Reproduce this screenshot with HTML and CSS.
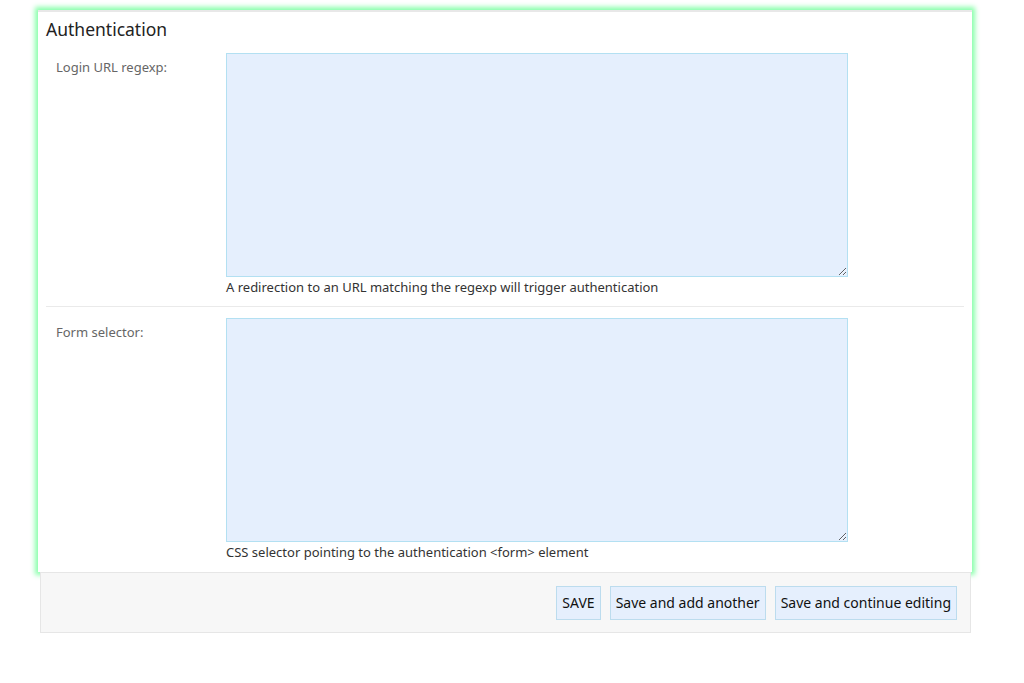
FILE: index.html
```html
<!DOCTYPE html>
<html lang="en">

<head>
    <meta charset="UTF-8">
    <title>Authentication</title>
    <link rel="stylesheet" href="styles.css">
</head>

<body>
    <form id="authForm">
        <fieldset class="module">
            <h2>Authentication</h2>

            <div class="form-row">
                <label for="login_url">Login URL regexp:</label>
                <div class="field">
                    <textarea id="login_url" name="login_url"></textarea>
                    <div class="help">A redirection to an URL matching the regexp will trigger authentication</div>
                </div>
            </div>

            <div class="form-row last">
                <label for="form_selector">Form selector:</label>
                <div class="field">
                    <textarea id="form_selector" name="form_selector"></textarea>
                    <div class="help">CSS selector pointing to the authentication &lt;form&gt; element</div>
                </div>
            </div>
        </fieldset>

        <div class="submit-row">
            <input type="submit" value="SAVE" name="_save">
            <input type="submit" value="Save and add another" name="_addanother">
            <input type="submit" value="Save and continue editing" name="_continue">
        </div>
    </form>
</body>

</html>
```

FILE: styles.css
```css
body {
    font-family: "Noto Sans", "Open Sans", sans-serif;
    margin: 0;
    padding: 0;
    background: #fff;
    color: #333;
}

.module {
    margin: 10px 52px 0 38px;
    padding: 0 8px 1px 8px;
    border: none;
    border-top: 2px solid #e8e8e8;
    background: #fff;
    box-shadow: 0 0 5px 3px #88ffaa;
    min-width: 0;
}

.module h2 {
    margin: 0;
    padding: 5px 0 2px 0;
    font-size: 17.5px;
    line-height: 24px;
    font-weight: normal;
    color: #222;
}

.form-row {
    display: flex;
    padding: 10px 10px 11px 10px;
    border-bottom: 1px solid #eaeaea;
}

.form-row + .form-row {
    padding-top: 11px;
}

.form-row.last {
    border-bottom: none;
}

.form-row label {
    width: 170px;
    flex-shrink: 0;
    padding-top: 5px;
    font-size: 13px;
    color: #666;
}

.field textarea {
    display: block;
    box-sizing: border-box;
    width: 622px;
    height: 224px;
    margin: 0;
    background: #e5effd;
    border: 1px solid #b3e0f2;
    font-family: inherit;
}

.help {
    font-size: 13px;
    color: #333;
    padding-top: 2px;
    line-height: 16px;
}

.submit-row {
    display: flex;
    justify-content: flex-end;
    gap: 9px;
    margin: 0 53px 0 40px;
    padding: 13px 13px 12px 0;
    background: #f7f7f7;
    border: 1px solid #e6e6e6;
}

.submit-row input[type="submit"] {
    height: 34px;
    padding: 0 5px 1px 5px;
    font-family: inherit;
    font-size: 14px;
    color: #111;
    background: #e5effd;
    border: 1px solid #bcdcee;
    cursor: pointer;
}
```
